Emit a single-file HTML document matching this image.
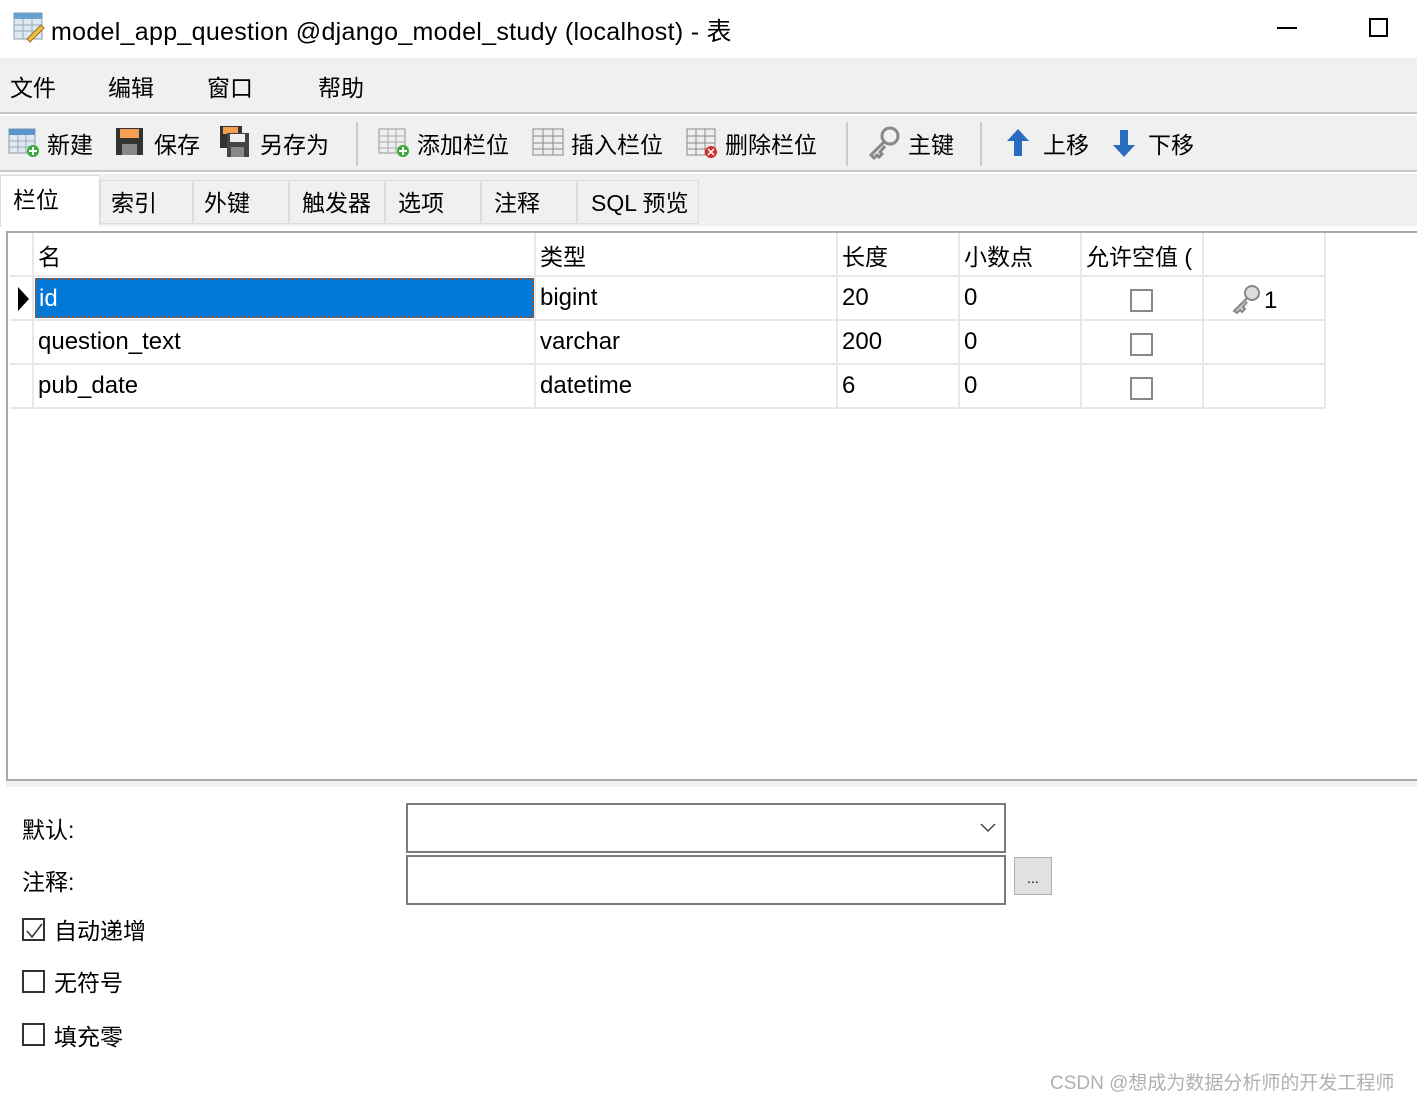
<!DOCTYPE html>
<html><head><meta charset="utf-8"><style>
*{margin:0;padding:0;box-sizing:border-box}
body{width:1417px;height:1101px;background:#fff;font-family:"Liberation Sans","Noto Sans CJK SC",sans-serif;font-size:23px;color:#000;position:relative;overflow:hidden}
.a{position:absolute;white-space:nowrap}
.menu{top:58px;left:0;width:1417px;height:56px;background:#f0f0f0;border-bottom:2px solid #c9c9c9}
.tool{top:116px;left:0;width:1417px;height:56px;background:#f0f0f0;border-bottom:2px solid #c9c9c9}
.tabs{top:174px;left:0;width:1417px;height:52px;background:#f0f0f0}
.tab{position:absolute;top:6px;height:44px;border:1px solid #dcdcdc;background:#f0f0f0;padding:3px 0 0 10px}
.grid{top:231px;left:6px;width:1420px;height:550px;border:2px solid #aaa;border-right:none;background:#fff}
.cell{position:absolute;height:44px;border-right:2px solid #e8e8e8;border-bottom:2px solid #e8e8e8;padding:7px 0 0 4px;font-size:24px}
.cb{position:absolute;width:23px;height:23px;border:2px solid #888;background:#fff}
</style></head><body>
<div class="a" style="left:0;top:0;width:1417px;height:58px;background:#fff"></div>
<svg class="a" style="left:13px;top:11px" width="34" height="32"><rect x="1" y="2" width="28" height="26" fill="#dde8f2" stroke="#8a9bb0"/><rect x="1" y="2" width="28" height="6" fill="#6aa0d0"/><path d="M1 14h28M1 20h28M10 8v20M19 8v20" stroke="#9ab" fill="none"/><path d="M14 28l14-14 3 3-14 14z" fill="#f0c040" stroke="#a07020"/></svg>
<div class="a" style="left:51px;top:12px;font-size:25px;letter-spacing:0.3px">model_app_question @django_model_study (localhost) - 表</div>
<div class="a" style="left:1277px;top:27px;width:20px;height:2px;background:#000"></div>
<div class="a" style="left:1369px;top:18px;width:19px;height:19px;border:2px solid #000"></div>

<div class="a menu"></div>
<div class="a" style="left:10px;top:69px">文件</div>
<div class="a" style="left:108px;top:69px">编辑</div>
<div class="a" style="left:207px;top:69px">窗口</div>
<div class="a" style="left:318px;top:69px">帮助</div>

<div class="a tool"></div>
<svg class="a" style="left:8px;top:127px" width="34" height="32"><rect x="1" y="2" width="26" height="24" fill="#dfe8f0" stroke="#8899aa"/><rect x="1" y="2" width="26" height="6" fill="#5a95cc"/><path d="M1 14h26M1 20h26M10 8v18M18 8v18" stroke="#9ab"/><circle cx="25" cy="24" r="6" fill="#3aaa3a"/><path d="M25 20v8M21 24h8" stroke="#fff" stroke-width="2"/></svg>
<div class="a" style="left:47px;top:126px">新建</div>
<svg class="a" style="left:115px;top:127px" width="30" height="30"><rect x="1" y="1" width="27" height="27" fill="#333"/><rect x="5" y="2" width="19" height="9" fill="#f5a050"/><rect x="7" y="17" width="15" height="11" fill="#888"/></svg>
<div class="a" style="left:154px;top:126px">保存</div>
<svg class="a" style="left:219px;top:125px" width="34" height="34"><rect x="1" y="1" width="22" height="22" fill="#333"/><rect x="4" y="2" width="15" height="7" fill="#f5a050"/><rect x="8" y="8" width="22" height="24" fill="#444"/><rect x="11" y="9" width="15" height="8" fill="#eee"/><rect x="12" y="22" width="13" height="10" fill="#888"/></svg>
<div class="a" style="left:260px;top:126px">另存为</div>
<div class="a" style="left:356px;top:122px;width:2px;height:44px;background:#ccc"></div>
<svg class="a" style="left:378px;top:127px" width="34" height="32"><rect x="1" y="2" width="26" height="24" fill="#eee" stroke="#999"/><path d="M1 9h26M1 15h26M1 21h26M10 2v24M18 2v24" stroke="#aaa"/><circle cx="25" cy="24" r="6" fill="#3aaa3a"/><path d="M25 20v8M21 24h8" stroke="#fff" stroke-width="2"/></svg>
<div class="a" style="left:417px;top:126px">添加栏位</div>
<svg class="a" style="left:532px;top:127px" width="34" height="32"><rect x="1" y="2" width="30" height="26" fill="#eee" stroke="#888"/><path d="M1 9h30M1 16h30M1 22h30M11 2v26M21 2v26" stroke="#888"/></svg>
<div class="a" style="left:571px;top:126px">插入栏位</div>
<svg class="a" style="left:686px;top:127px" width="34" height="32"><rect x="1" y="2" width="28" height="26" fill="#eee" stroke="#888"/><path d="M1 9h28M1 16h28M1 22h28M10 2v26M19 2v26" stroke="#888"/><circle cx="25" cy="25" r="6" fill="#d03030"/><path d="M22 22l6 6M28 22l-6 6" stroke="#fff" stroke-width="1.5"/></svg>
<div class="a" style="left:725px;top:126px">删除栏位</div>
<div class="a" style="left:846px;top:122px;width:2px;height:44px;background:#ccc"></div>
<svg class="a" style="left:867px;top:126px" width="34" height="34"><circle cx="23" cy="10" r="8" fill="none" stroke="#888" stroke-width="3"/><path d="M17 16L4 29l3 3 3-3 2 2 3-3-2-2 5-6" fill="none" stroke="#888" stroke-width="3"/></svg>
<div class="a" style="left:908px;top:126px">主键</div>
<div class="a" style="left:980px;top:122px;width:2px;height:44px;background:#ccc"></div>
<svg class="a" style="left:1005px;top:128px" width="28" height="30"><path d="M13 1L2 13h7v15h8V13h7z" fill="#2a6cc0"/></svg>
<div class="a" style="left:1043px;top:126px">上移</div>
<svg class="a" style="left:1111px;top:128px" width="28" height="30"><path d="M13 29L2 17h7V2h8v15h7z" fill="#2a6cc0"/></svg>
<div class="a" style="left:1148px;top:126px">下移</div>

<div class="a tabs"></div>
<div class="a" style="left:0;top:175px;width:100px;height:52px;background:#fff;border:1px solid #dcdcdc;border-bottom:none;padding:5px 0 0 12px">栏位</div>
<div class="a" style="left:0;top:174px;width:1417px;height:52px">
<div class="tab" style="left:100px;width:93px">索引</div>
<div class="tab" style="left:193px;width:96px">外键</div>
<div class="tab" style="left:289px;width:96px;padding-left:12px">触发器</div>
<div class="tab" style="left:385px;width:96px;padding-left:12px">选项</div>
<div class="tab" style="left:481px;width:96px;padding-left:12px">注释</div>
<div class="tab" style="left:577px;width:122px;padding-left:13px">SQL 预览</div>
</div>

<div class="a grid"></div>
<div class="a" style="left:8px;top:233px;width:1417px;height:180px">
<div class="cell" style="left:2px;top:0;width:24px"></div>
<div class="cell" style="left:26px;top:0;width:502px;padding-top:5px;font-size:23px">名</div>
<div class="cell" style="left:528px;top:0;width:302px;padding-top:5px;font-size:23px">类型</div>
<div class="cell" style="left:830px;top:0;width:122px;padding-top:5px;font-size:23px">长度</div>
<div class="cell" style="left:952px;top:0;width:122px;padding-top:5px;font-size:23px">小数点</div>
<div class="cell" style="left:1074px;top:0;width:122px;padding-top:5px;font-size:23px">允许空值 (</div>
<div class="cell" style="left:1196px;top:0;width:122px"></div>

<div class="cell" style="left:2px;top:44px;width:24px"><svg width="14" height="26" style="margin:2px 0 0 2px"><path d="M2 1l11 12-11 12z"/></svg></div>
<div class="cell" style="left:26px;top:44px;width:502px;padding:0"><div style="margin:1px 0 0 1px;width:499px;height:40px;background:#0078d7;border:2px dotted #a0522d;color:#fff;padding:5px 0 0 2px">id</div></div>
<div class="cell" style="left:528px;top:44px;width:302px">bigint</div>
<div class="cell" style="left:830px;top:44px;width:122px">20</div>
<div class="cell" style="left:952px;top:44px;width:122px">0</div>
<div class="cell" style="left:1074px;top:44px;width:122px"></div>
<div class="cell" style="left:1196px;top:44px;width:122px;padding-left:26px"><svg width="34" height="30" style="vertical-align:-6px"><circle cx="22" cy="9" r="7" fill="#ddd" stroke="#888" stroke-width="2"/><path d="M17 14L4 27l3 2 3-3 2 2 3-3-2-2 4-5" fill="#ccc" stroke="#888" stroke-width="2"/></svg>1</div>
<div class="cell" style="left:2px;top:88px;width:24px"></div>
<div class="cell" style="left:26px;top:88px;width:502px">question_text</div>
<div class="cell" style="left:528px;top:88px;width:302px">varchar</div>
<div class="cell" style="left:830px;top:88px;width:122px">200</div>
<div class="cell" style="left:952px;top:88px;width:122px">0</div>
<div class="cell" style="left:1074px;top:88px;width:122px"></div>
<div class="cell" style="left:1196px;top:88px;width:122px"></div>
<div class="cell" style="left:2px;top:132px;width:24px"></div>
<div class="cell" style="left:26px;top:132px;width:502px">pub_date</div>
<div class="cell" style="left:528px;top:132px;width:302px">datetime</div>
<div class="cell" style="left:830px;top:132px;width:122px">6</div>
<div class="cell" style="left:952px;top:132px;width:122px">0</div>
<div class="cell" style="left:1074px;top:132px;width:122px"></div>
<div class="cell" style="left:1196px;top:132px;width:122px"></div>
</div>
<div class="cb" style="left:1130px;top:289px"></div>
<div class="cb" style="left:1130px;top:333px"></div>
<div class="cb" style="left:1130px;top:377px"></div>

<div class="a" style="left:6px;top:781px;width:1411px;height:6px;background:#f0f0f0"></div>
<div class="a" style="left:22px;top:811px">默认:</div>
<div class="a" style="left:406px;top:803px;width:600px;height:50px;border:2px solid #7a7a7a"></div>
<svg class="a" style="left:979px;top:822px" width="18" height="12"><path d="M2 2l7 7 7-7" fill="none" stroke="#444" stroke-width="1.5"/></svg>
<div class="a" style="left:22px;top:863px">注释:</div>
<div class="a" style="left:406px;top:855px;width:600px;height:50px;border:2px solid #7a7a7a"></div>
<div class="a" style="left:1014px;top:857px;width:38px;height:38px;border:1px solid #adadad;background:#e1e1e1;font-size:14px;text-align:center;line-height:40px">...</div>
<div class="cb" style="left:22px;top:918px;border-color:#333"><svg width="20" height="20"><path d="M3 10l5 6 10-13" fill="none" stroke="#333" stroke-width="1.5"/></svg></div>
<div class="a" style="left:54px;top:912px">自动递增</div>
<div class="cb" style="left:22px;top:970px;border-color:#333"></div>
<div class="a" style="left:54px;top:964px">无符号</div>
<div class="cb" style="left:22px;top:1023px;border-color:#333"></div>
<div class="a" style="left:54px;top:1018px">填充零</div>
<div class="a" style="left:1050px;top:1068px;font-size:19px;color:#b0b0b0">CSDN @想成为数据分析师的开发工程师</div>
</body></html>
